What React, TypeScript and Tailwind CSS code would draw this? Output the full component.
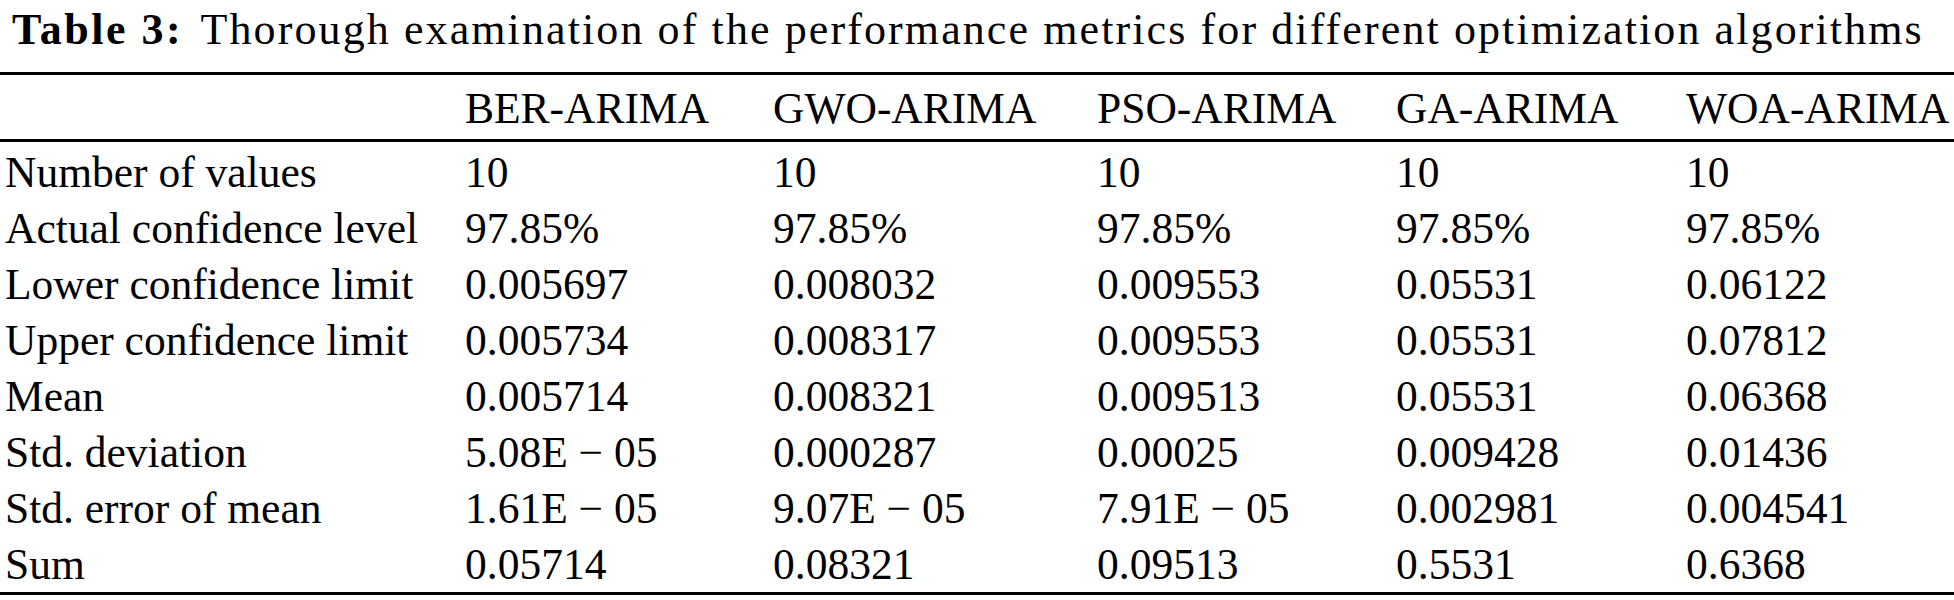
const headers = ["BER-ARIMA", "GWO-ARIMA", "PSO-ARIMA", "GA-ARIMA", "WOA-ARIMA"];

const rows: { label: string; values: string[] }[] = [
    { label: "Number of values", values: ["10", "10", "10", "10", "10"] },
    { label: "Actual confidence level", values: ["97.85%", "97.85%", "97.85%", "97.85%", "97.85%"] },
    { label: "Lower confidence limit", values: ["0.005697", "0.008032", "0.009553", "0.05531", "0.06122"] },
    { label: "Upper confidence limit", values: ["0.005734", "0.008317", "0.009553", "0.05531", "0.07812"] },
    { label: "Mean", values: ["0.005714", "0.008321", "0.009513", "0.05531", "0.06368"] },
    { label: "Std. deviation", values: ["5.08E \u2212 05", "0.000287", "0.00025", "0.009428", "0.01436"] },
    { label: "Std. error of mean", values: ["1.61E \u2212 05", "9.07E \u2212 05", "7.91E \u2212 05", "0.002981", "0.004541"] },
    { label: "Sum", values: ["0.05714", "0.08321", "0.09513", "0.5531", "0.6368"] },
];

export default function App() {
    return (
        <div className="w-[1954px] h-[600px] bg-white text-black font-['Liberation_Serif','Times_New_Roman',serif] overflow-hidden">
            {/* Caption */}
            <div className="h-[72px] pt-[8px] pl-[12px] text-[44px] leading-[44px] whitespace-nowrap">
                <span className="font-bold tracking-[2.5px]">Table 3:</span>
                <span className="tracking-[2.1px] pl-[5px]">
                    {" "}Thorough examination of the performance metrics for different optimization algorithms
                </span>
            </div>

            {/* Header */}
            <div className="border-t-[3px] border-black">
                <div className="grid grid-cols-[465px_308px_324px_299px_290px_1fr] h-[64px] pt-[2px] text-[43.5px] leading-[62px] whitespace-nowrap">
                    <div />
                    {headers.map((h) => (
                        <div key={h}>{h}</div>
                    ))}
                </div>
            </div>

            {/* Body */}
            <div className="border-t-[3px] border-b-[3px] border-black pt-[2px] text-[43.5px] leading-[56px] whitespace-nowrap">
                {rows.map((row) => (
                    <div key={row.label} className="grid grid-cols-[465px_308px_324px_299px_290px_1fr] h-[56px]">
                        <div className="pl-[5px]">{row.label}</div>
                        {row.values.map((v, j) => (
                            <div key={j}>{v}</div>
                        ))}
                    </div>
                ))}
            </div>
        </div>
    );
}
